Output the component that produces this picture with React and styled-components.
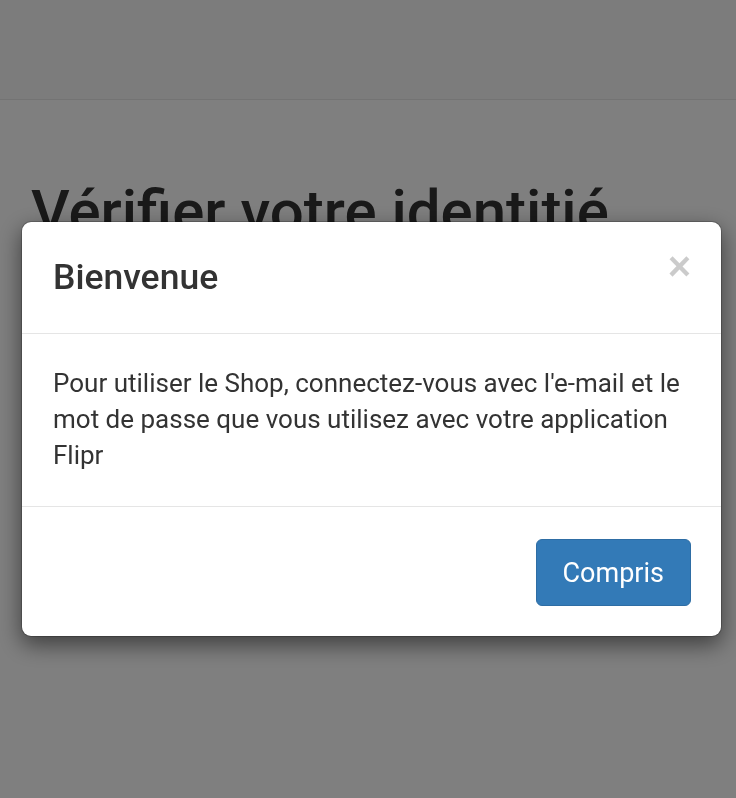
import React from 'react';
import styled, { createGlobalStyle } from 'styled-components';

const GlobalStyle = createGlobalStyle`
  html, body {
    margin: 0;
    padding: 0;
    background: #ffffff;
    font-family: Roboto, "Liberation Sans", Arial, sans-serif;
    color: #333333;
  }
  * { box-sizing: border-box; }
`;

// page behind the modal
const Page = styled.div`
  min-height: 798px;
  background: #ffffff;
`;

const Navbar = styled.div`
  height: 100px;
  background: #f8f8f8;
  border-bottom: 1px solid #e7e7e7;
`;

const Container = styled.div`
  padding: 0 31px;
`;

const PageTitle = styled.h1`
  margin: 79px 0 0;
  font-size: 60px;
  line-height: 1.1;
  font-weight: 500;
  color: #333333;
  white-space: nowrap;
`;

// modal
const Backdrop = styled.div`
  position: fixed;
  inset: 0;
  background: rgba(0, 0, 0, 0.5);
`;

const Dialog = styled.div`
  margin: 221px 0 0 21px;
  width: 701px;
  background: #ffffff;
  border: 1px solid rgba(0, 0, 0, 0.2);
  border-radius: 10px;
  box-shadow: 0 8px 22px rgba(0, 0, 0, 0.5);
  background-clip: padding-box;
`;

const Header = styled.div`
  display: flex;
  align-items: flex-start;
  justify-content: space-between;
  padding: 30px 30px 31px 31px;
  border-bottom: 1px solid #e5e5e5;
`;

const Title = styled.h4`
  margin: 0;
  font-size: 35.5px;
  line-height: 50px;
  font-weight: 500;
  color: #333333;
`;

const Close = styled.button`
  border: none;
  background: none;
  padding: 0;
  margin-top: -11px;
  font-family: "Liberation Sans", Arial, sans-serif;
  font-size: 40px;
  line-height: 50px;
  font-weight: 700;
  color: #000;
  opacity: 0.2;
  cursor: pointer;
`;

const Body = styled.div`
  padding: 31px 30px 33px 31px;
  font-size: 26px;
  line-height: 36px;
  color: #333333;
`;

const Footer = styled.div`
  display: flex;
  justify-content: flex-end;
  padding: 32px 30px 30px;
  border-top: 1px solid #e5e5e5;
`;

const Button = styled.button`
  height: 67px;
  padding: 0 26px;
  font-family: Roboto, "Liberation Sans", Arial, sans-serif;
  font-size: 27px;
  color: #ffffff;
  background: #337ab7;
  border: 1px solid #2e6da4;
  border-radius: 6px;
  cursor: pointer;
`;

const App = () => {
  return (
    <>
      <GlobalStyle />
      <Page>
        <Navbar />
        <Container>
          <PageTitle>Vérifier votre identitié</PageTitle>
        </Container>
      </Page>
      <Backdrop>
        <Dialog>
          <Header>
            <Title>Bienvenue</Title>
            <Close aria-label="Fermer">×</Close>
          </Header>
          <Body>
            Pour utiliser le Shop, connectez-vous avec l'e-mail et le mot de passe que vous utilisez avec votre application Flipr
          </Body>
          <Footer>
            <Button>Compris</Button>
          </Footer>
        </Dialog>
      </Backdrop>
    </>
  );
};

export default App;
